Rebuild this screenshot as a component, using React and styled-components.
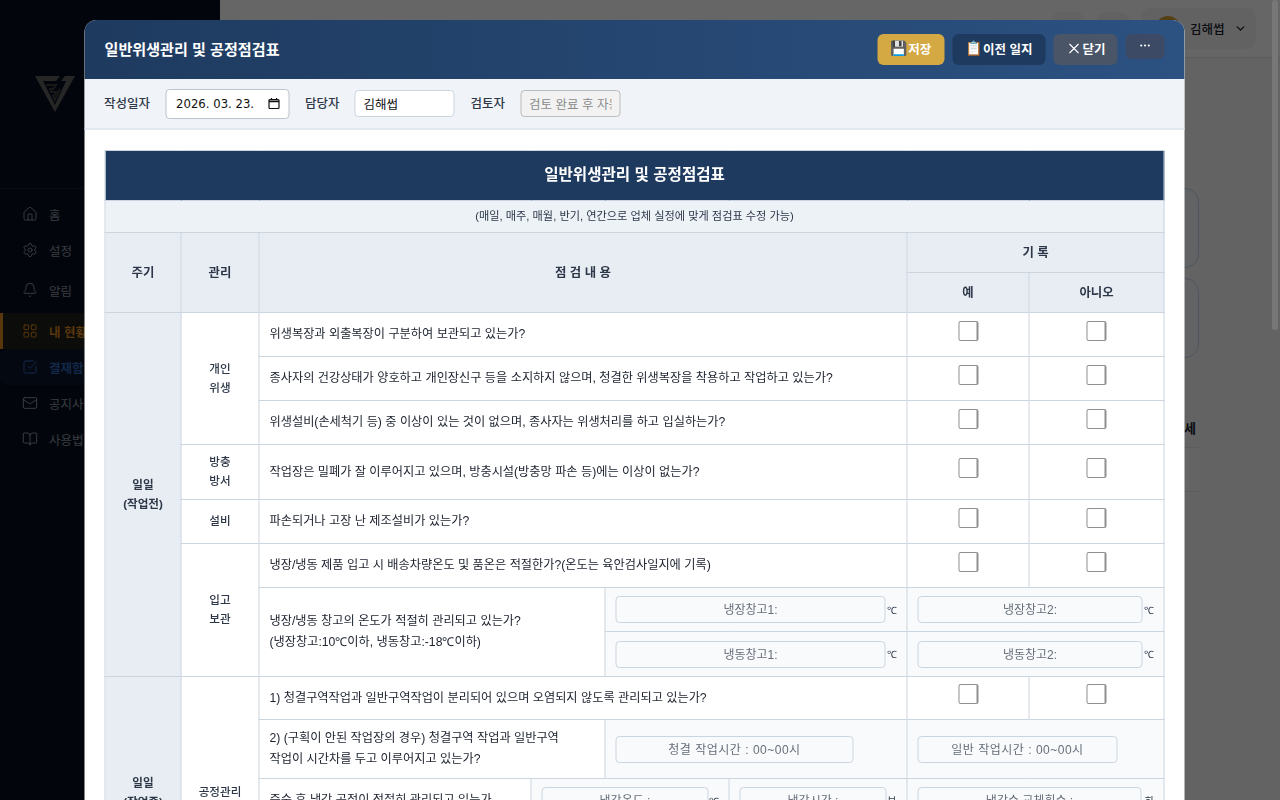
import React from "react";
import styled, { createGlobalStyle } from "styled-components";
import { Home, Settings, Bell, LayoutGrid, SquareCheckBig, Mail, BookOpen, ChevronDown, X, Ellipsis } from "lucide-react";

const FONT = `"Liberation Sans", "Noto Sans CJK KR", sans-serif`;

const Global = createGlobalStyle`
  html, body { margin: 0; padding: 0; height: 100%; overflow: hidden; }
  body { font-family: ${FONT}; background: #f7f8fa; }
  * { box-sizing: border-box; }
`;

const Shell = styled.div`
  display: flex;
  width: 1280px;
  height: 800px;
  overflow: hidden;
`;
const Side = styled.aside`
  width: 220px;
  flex: none;
  background: #070f1e;
  color: #cbd5e0;
  display: flex;
  flex-direction: column;
`;
const LogoArea = styled.div`
  height: 189px;
  padding: 75px 0 0 34px;
  border-bottom: 1px solid #17202f;
`;
const Nav = styled.nav`
  display: flex;
  flex-direction: column;
  padding-top: 7px;
`;
const NavItem = styled.div`
  height: 36px;
  display: flex;
  align-items: center;
  gap: 11px;
  padding-left: ${p => (p.$active ? 19 : 22)}px;
  font-size: 12.5px;
  font-weight: ${p => (p.$active || p.$blue ? 700 : 400)};
  color: ${p => (p.$active ? "#d9891c" : p.$blue ? "#2f62b4" : "#8a94a3")};
  background: ${p => (p.$active ? "rgba(217,137,28,.12)" : p.$blue ? "rgba(49,100,180,.1)" : "transparent")};
  border-left: ${p => (p.$active ? "3px solid #d9891c" : "none")};
  border-radius: ${p => (p.$blue ? "8px" : "0")};
  margin-top: ${p => p.$gap || 0}px;
`;
const Main = styled.main`
  flex: 1;
  display: flex;
  flex-direction: column;
  background: #f7f8fa;
`;
const TopBar = styled.header`
  height: 58px;
  flex: none;
  background: #fff;
  border-bottom: 1px solid #e2e8f0;
  display: flex;
  justify-content: flex-end;
  align-items: center;
  gap: 11px;
  padding: 0 24px 0 0;
`;
const GhostBtn = styled.div`
  width: 34px;
  height: 34px;
  border-radius: 10px;
  background: #f4f5f7;
`;
const UserPill = styled.div`
  width: 115px;
  height: 41px;
  border-radius: 10px;
  background: #f4f5f7;
  display: flex;
  align-items: center;
  gap: 9px;
  padding-left: 14px;
  font-size: 12.5px;
  font-weight: 500;
  color: #1a202c;
`;
const Avatar = styled.div`
  width: 26px;
  height: 26px;
  border-radius: 50%;
  background: #d69e2e;
`;
const Content = styled.div`
  flex: 1;
  display: flex;
  flex-direction: column;
  align-items: flex-end;
  padding: 130px 81px 0 0;
`;
const StatCard = styled.div`
  width: 120px;
  height: 80px;
  border: 1px solid #c5d3ee;
  border-radius: 14px;
  background: #f4f7fd;
  margin-bottom: 10px;
`;
const TableHint = styled.div`
  width: 120px;
  height: 30px;
  margin-top: 50px;
  padding: 0 0 0 105px;
  font-size: 13px;
  font-weight: 700;
  border-bottom: 1px solid #e2e8f0;
  color: #1a202c;
`;
const TableHintRow = styled.div`
  width: 120px;
  height: 44px;
  background: #fafbfc;
  border-bottom: 1px solid #e2e8f0;
`;
const ScrollThumb = styled.div`
  position: fixed;
  top: 0;
  right: 2px;
  width: 6px;
  height: 330px;
  border-radius: 3px;
  background: #777;
`;
const Overlay = styled.div`
  position: fixed;
  inset: 0;
  background: rgba(0, 0, 0, 0.6);
`;
const Modal = styled.div`
  position: fixed;
  top: 20px;
  left: 85px;
  width: 1100px;
  height: 800px;
  transform: translateX(-0.5px);
  background: #fff;
  border-radius: 12px 12px 0 0;
  overflow: hidden;
  display: flex;
  flex-direction: column;
`;
const ModalHead = styled.div`
  height: 59px;
  flex: none;
  background: linear-gradient(90deg, #1e3a5f, #2c5282);
  display: flex;
  align-items: center;
  justify-content: space-between;
  padding: 0 20px;
`;
const ModalTitle = styled.h2`
  margin: 0 0 4px;
  color: #fff;
  font-size: 15.1px;
  font-weight: 700;
`;
const Actions = styled.div`
  display: flex;
  gap: 8px;
  align-items: flex-start;
  margin-top: -1px;
`;
const ActionBtn = styled.button`
  height: ${p => (p.$small ? 25 : 31)}px;
  width: ${p => p.$w}px;
  border: 0;
  border-radius: 6px;
  background: ${p => p.$bg};
  color: #fff;
  font: 700 12.5px ${FONT};
  display: flex;
  align-items: center;
  justify-content: center;
  padding: 0 0 2px;
  white-space: nowrap;
`;
const Emoji = styled.span`
  font-family: "Noto Color Emoji", sans-serif;
  font-weight: 400;
  font-size: 14px;
`;
const FilterBar = styled.div`
  height: 51px;
  flex: none;
  background: #f0f4f8;
  border-bottom: 2px solid #e2e8f0;
  display: flex;
  align-items: center;
  padding: 0 0 0 19.5px;
`;
const FieldLabel = styled.label`
  font-size: 12.5px;
  font-weight: 500;
  color: #2d3748;
  margin: 0 ${p => p.$mr}px 2px 0;
`;
const Field = styled.div`
  width: ${p => p.$w}px;
  flex: none;
  height: ${p => p.$h || 27}px;
  border: 1px solid ${p => (p.$off ? "#bbb" : p.$h ? "#bdc4ce" : "#cbd5e0")};
  border-radius: 4px;
  background: ${p => (p.$off ? "#f2f2f2" : "#fff")};
  color: ${p => (p.$off ? "#8a8a8a" : "#111")};
  font-size: 12.5px;
  display: flex;
  align-items: center;
  justify-content: space-between;
  padding: 0 8px 0 ${p => p.$pl || 8}px;
  margin-right: ${p => p.$mr || 0}px;
  white-space: nowrap;
`;
const FieldText = styled.span`
  overflow: hidden;
  display: block;
  flex: 1;
`;
const DateText = styled.span`
  font-family: "DejaVu Sans", sans-serif;
  font-size: 11.7px;
`;
const ModalBody = styled.div`
  padding: 20px;
  flex: 1;
`;
const Sheet = styled.table`
  width: 1060px;
  table-layout: fixed;
  border-collapse: collapse;
  font-size: 12.2px;
  color: #1a202c;
  border: 1px solid #cbd5e0;
  td, th { border: 1px solid #cbd5e0; }
`;
const TitleCell = styled.th`
  height: 50px;
  padding: 0 0 5px;
  background: #1e3a5f;
  color: #fff;
  font-size: 15.6px;
  font-weight: 700;
`;
const SubCell = styled.td`
  height: 32px;
  padding: 0 0 3px;
  background: #edf2f7;
  font-size: 11.2px;
  text-align: center;
  color: #2d3748;
`;
const Head = styled.th`
  height: ${p => p.$h || 40}px;
  padding: 0 0 2px;
  background: #e8edf4;
  color: #2d3748;
  font-size: 12.4px;
  font-weight: 700;
  text-align: center;
`;
const Group = styled.td`
  background: ${p => (p.$shade ? "#e8edf4" : "#fff")};
  font-size: 11.6px;
  font-weight: ${p => (p.$shade ? 700 : 500)};
  line-height: 19px;
  padding: 0 0 2px;
  text-align: center;
  color: #2d3748;
`;
const Question = styled.td`
  height: ${p => p.$h}px;
  padding: 0 10px;
  line-height: 21px;
  background: #fff;
`;
const CheckCell = styled.td`
  text-align: center;
  vertical-align: middle;
  padding-bottom: 9px;
  background: #fff;
`;
const Box = styled.span`
  display: block;
  margin: 0 auto;
  width: 20px;
  height: 20px;
  border: 1px solid #8f8f8f;
  border-right-width: 2px;
  border-radius: 2px;
  background: #fff;
`;
const InputCell = styled.td`
  background: #f8fafc;
  padding: 0 10px;
  height: ${p => p.$h}px;
`;
const InRow = styled.div`
  display: flex;
  align-items: center;
  justify-content: space-between;
  font-size: 10px;
  color: #2d3748;
`;
const Deg = styled.span`
  font-family: "Liberation Sans", sans-serif;
`;
const Slot = styled.div`
  width: ${p => p.$w}px;
  height: 27px;
  border: 1px solid #cbd5e0;
  border-radius: 4px;
  background: #f9fafb;
  color: #666e7a;
  font-size: 12px;
  letter-spacing: ${p => (p.$time ? "0.5px" : "0")};
  display: flex;
  align-items: center;
  justify-content: center;
  padding-bottom: 2px;
  white-space: nowrap;
`;

const YesNo = () => (
  <>
    <CheckCell><Box /></CheckCell>
    <CheckCell><Box /></CheckCell>
  </>
);

const Logo = () => (
  <svg width="42" height="38" viewBox="0 0 42 38" fill="none">
    <path d="M1 1H26L22 6H9L21 30L32 6H27L31 1H41L21 37Z" fill="#5f5f5f" />
    <path d="M12 10H22L19 14H16L17 17H22L20 21H19L21 25L26 14" stroke="#3c3c3c" strokeWidth="2" />
  </svg>
);

const DateIcon = () => (
  <svg width="13" height="13" viewBox="0 0 13 13" fill="none">
    <rect x="1.5" y="2.5" width="10" height="9" rx="1" stroke="#111" strokeWidth="1.2" />
    <path d="M1.5 3.5H11.5V5.2H1.5Z" fill="#111" />
    <path d="M4 1V3M9 1V3" stroke="#111" strokeWidth="1.2" />
  </svg>
);

export default function App() {
  return (
    <>
      <Global />
      <Shell>
        <Side>
          <LogoArea><Logo /></LogoArea>
          <Nav>
            <NavItem><Home size={16} strokeWidth={1.5} />홈</NavItem>
            <NavItem><Settings size={16} strokeWidth={1.5} />설정</NavItem>
            <NavItem $gap={4}><Bell size={16} strokeWidth={1.5} />알림</NavItem>
            <NavItem $gap={5} $active><LayoutGrid size={16} strokeWidth={1.5} />내 현황</NavItem>
            <NavItem $blue><SquareCheckBig size={16} strokeWidth={1.5} />결재함</NavItem>
            <NavItem><Mail size={16} strokeWidth={1.5} />공지사항</NavItem>
            <NavItem><BookOpen size={16} strokeWidth={1.5} />사용법</NavItem>
          </Nav>
        </Side>
        <Main>
          <TopBar>
            <GhostBtn />
            <GhostBtn />
            <UserPill>
              <Avatar />김해썹<ChevronDown size={13} strokeWidth={2.5} />
            </UserPill>
          </TopBar>
          <Content>
            <StatCard />
            <StatCard />
            <TableHint>세</TableHint>
            <TableHintRow />
          </Content>
        </Main>
      </Shell>
      <Overlay />
      <ScrollThumb />
      <Modal>
        <ModalHead>
          <ModalTitle>일반위생관리 및 공정점검표</ModalTitle>
          <Actions>
            <ActionBtn $w={67} $bg="#d4a843"><Emoji>💾</Emoji>저장</ActionBtn>
            <ActionBtn $w={93} $bg="#1e3a5f"><Emoji>📋</Emoji>이전 일지</ActionBtn>
            <ActionBtn $w={64} $bg="#4a5568"><X size={17} strokeWidth={1.6} />닫기</ActionBtn>
            <ActionBtn $w={39} $small $bg="#3c4a66"><Ellipsis size={13} strokeWidth={2} /></ActionBtn>
          </Actions>
        </ModalHead>
        <FilterBar>
          <FieldLabel $mr={15}>작성일자</FieldLabel>
          <Field $w={124} $h={30} $pl={10} $mr={16}><DateText>2026. 03. 23.</DateText><DateIcon /></Field>
          <FieldLabel $mr={15}>담당자</FieldLabel>
          <Field $w={100} $mr={16}>김해썹</Field>
          <FieldLabel $mr={15}>검토자</FieldLabel>
          <Field $w={100} $off><FieldText>검토 완료 후 자동</FieldText></Field>
        </FilterBar>
        <ModalBody>
          <Sheet>
            <colgroup>
              <col style={{ width: 76 }} />
              <col style={{ width: 78 }} />
              <col style={{ width: 272 }} />
              <col style={{ width: 74 }} />
              <col style={{ width: 124 }} />
              <col style={{ width: 178 }} />
              <col style={{ width: 122 }} />
              <col style={{ width: 135 }} />
            </colgroup>
            <tbody>
              <tr><TitleCell colSpan={8}>일반위생관리 및 공정점검표</TitleCell></tr>
              <tr><SubCell colSpan={8}>(매일, 매주, 매월, 반기, 연간으로 업체 실정에 맞게 점검표 수정 가능)</SubCell></tr>
              <tr>
                <Head rowSpan={2}>주기</Head>
                <Head rowSpan={2}>관리</Head>
                <Head rowSpan={2} colSpan={4}>점 검 내 용</Head>
                <Head colSpan={2}>기 록</Head>
              </tr>
              <tr><Head>예</Head><Head>아니오</Head></tr>

              <tr>
                <Group $shade rowSpan={8}>일일<br />(작업전)</Group>
                <Group rowSpan={3}>개인<br />위생</Group>
                <Question $h={44} colSpan={4}>위생복장과 외출복장이 구분하여 보관되고 있는가?</Question>
                <YesNo />
              </tr>
              <tr>
                <Question $h={44} colSpan={4}>종사자의 건강상태가 양호하고 개인장신구 등을 소지하지 않으며, 청결한 위생복장을 착용하고 작업하고 있는가?</Question>
                <YesNo />
              </tr>
              <tr>
                <Question $h={44} colSpan={4}>위생설비(손세척기 등) 중 이상이 있는 것이 없으며, 종사자는 위생처리를 하고 입실하는가?</Question>
                <YesNo />
              </tr>
              <tr>
                <Group>방충<br />방서</Group>
                <Question $h={55} colSpan={4}>작업장은 밀폐가 잘 이루어지고 있으며, 방충시설(방충망 파손 등)에는 이상이 없는가?</Question>
                <YesNo />
              </tr>
              <tr>
                <Group>설비</Group>
                <Question $h={44} colSpan={4}>파손되거나 고장 난 제조설비가 있는가?</Question>
                <YesNo />
              </tr>
              <tr>
                <Group rowSpan={3}>입고<br />보관</Group>
                <Question $h={44} colSpan={4}>냉장/냉동 제품 입고 시 배송차량온도 및 품온은 적절한가?(온도는 육안검사일지에 기록)</Question>
                <YesNo />
              </tr>
              <tr>
                <Question rowSpan={2} colSpan={2}>냉장/냉동 창고의 온도가 적절히 관리되고 있는가?<br />(냉장창고:10<Deg>℃</Deg>이하, 냉동창고:-18<Deg>℃</Deg>이하)</Question>
                <InputCell $h={44} colSpan={2}><InRow><Slot $w={270}>냉장창고1:</Slot><Deg>℃</Deg></InRow></InputCell>
                <InputCell colSpan={2}><InRow><Slot $w={225}>냉장창고2:</Slot><Deg>℃</Deg></InRow></InputCell>
              </tr>
              <tr>
                <InputCell $h={45} colSpan={2}><InRow><Slot $w={270}>냉동창고1:</Slot><Deg>℃</Deg></InRow></InputCell>
                <InputCell colSpan={2}><InRow><Slot $w={225}>냉동창고2:</Slot><Deg>℃</Deg></InRow></InputCell>
              </tr>

              <tr>
                <Group $shade rowSpan={4}>일일<br />(작업중)</Group>
                <Group rowSpan={4}>공정관리</Group>
                <Question $h={43} colSpan={4}>1) 청결구역작업과 일반구역작업이 분리되어 있으며 오염되지 않도록 관리되고 있는가?</Question>
                <YesNo />
              </tr>
              <tr>
                <Question $h={59} colSpan={2}>2) (구획이 안된 작업장의 경우) 청결구역 작업과 일반구역<br />작업이 시간차를 두고 이루어지고 있는가?</Question>
                <InputCell colSpan={2}><Slot $w={238} $time>청결 작업시간 : 00~00시</Slot></InputCell>
                <InputCell colSpan={2}><Slot $w={200} $time>일반 작업시간 : 00~00시</Slot></InputCell>
              </tr>
              <tr>
                <Question $h={44}>증숙 후 냉각 공정이 적절히 관리되고 있는가</Question>
                <InputCell colSpan={2}><InRow><Slot $w={168}>냉각온도 :</Slot><Deg>℃</Deg></InRow></InputCell>
                <InputCell><InRow><Slot $w={147}>냉각시간 :</Slot>분</InRow></InputCell>
                <InputCell colSpan={2}><InRow><Slot $w={224}>냉각수 교체횟수 :</Slot>회</InRow></InputCell>
              </tr>
              <tr>
                <Question $h={86} colSpan={4}></Question>
                <YesNo />
              </tr>
            </tbody>
          </Sheet>
        </ModalBody>
      </Modal>
    </>
  );
}
